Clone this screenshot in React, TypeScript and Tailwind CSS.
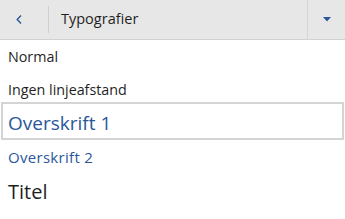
const font = { fontFamily: '"Open Sans", "Noto Sans", sans-serif' };

export default function App() {
    return (
        <div className="w-[345px] h-[219px] bg-white overflow-hidden" style={font}>
            {/* Header */}
            <header className="h-[40px] bg-[#e7e7e7] border-b border-[#d2d2d2] flex items-stretch">
                <button className="w-[48px] flex items-center justify-center">
                    <svg width="6" height="9" viewBox="0 0 6 9" className="-ml-[10px]">
                        <path d="M5 0.5 L1.2 4.5 L5 8.5" fill="none" stroke="#2b579a" strokeWidth="1.4" />
                    </svg>
                </button>
                <div className="w-px bg-[#d0d0d0] my-[6px]" />
                <div className="flex-1 flex items-center pl-[12px] text-[14.5px] text-[#1f1f1f] leading-none pb-[1px]">
                    Typografier
                </div>
                <div className="w-px bg-[#d6d6d6]" />
                <button className="w-[37px] flex items-center justify-center">
                    <svg width="8" height="5" viewBox="0 0 8 5">
                        <path d="M0 0 H8 L4 4.5 Z" fill="#2b579a" />
                    </svg>
                </button>
            </header>

            {/* Style list */}
            <ul className="text-[#1f1f1f]">
                <li className="h-[34px] flex items-center px-[8px] text-[14.3px] leading-none pt-[1px]">Normal</li>
                <li className="h-[28px] flex items-center px-[8px] text-[14.3px] leading-none pt-[5px]">Ingen linjeafstand</li>
                <li className="h-[38px] mx-[1px] border-2 border-[#d4d4d4] flex items-center px-[5px] text-[19px] text-[#2b579a] leading-none pt-[5px]">
                    Overskrift 1
                </li>
                <li className="h-[34px] flex items-center px-[8px] text-[15px] tracking-[0.3px] text-[#2b579a] leading-none pt-[1px]">Overskrift 2</li>
                <li className="h-[34px] flex items-center px-[8px] text-[20px] leading-none pt-[1px]">Titel</li>
            </ul>
        </div>
    );
}
